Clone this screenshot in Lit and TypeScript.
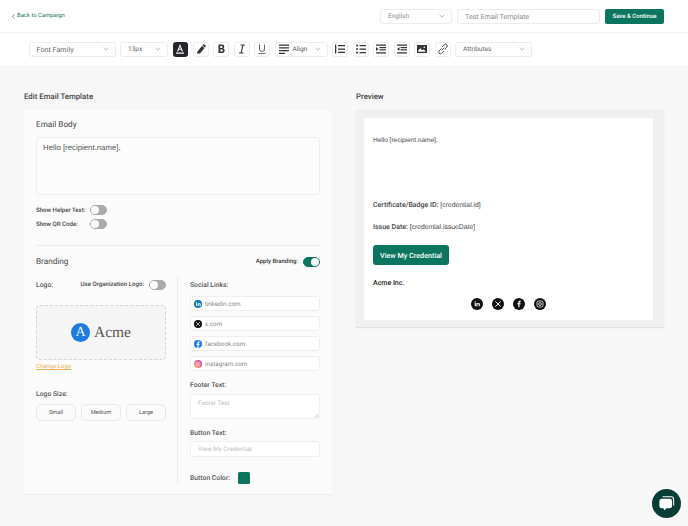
import { LitElement, html, css, svg } from "lit";
import { customElement } from "lit/decorators.js";

const chev = html`<svg class="chev" viewBox="0 0 10 6" width="6" height="4"><path d="M1 1l4 4 4-4" fill="none" stroke="currentColor" stroke-width="1"/></svg>`;
const ic = (body: unknown, s = 12) => html`<svg viewBox="0 0 24 24" width=${s} height=${s}>${body}</svg>`;

@customElement("app-root")
export class AppRoot extends LitElement {
  static styles = css`
    :host { display: block; width: 688px; height: 526px; overflow: hidden; position: relative; background: #f7f7f7; font-family: "Roboto", "Liberation Sans", sans-serif; color: #333; font-size: 6.5px; text-rendering: geometricPrecision; -webkit-font-smoothing: antialiased; }
    * { box-sizing: border-box; }
    .top { height: 33px; background: #fff; display: flex; align-items: center; padding: 0 24px 0 12px; border-bottom: 1px solid #f2f2f2; }
    .back { color: #0b7560; font-size: 5.9px; flex: 1; display: flex; align-items: center; gap: 2px; }
    .field { border: 1px solid #ececec; border-radius: 3px; background: #fff; display: flex; align-items: center; color: #8b8b8b; }
    .lang { width: 72px; height: 15px; padding: 0 6px 0 7px; justify-content: space-between; margin-right: 5px; }
    .name { width: 143px; height: 15px; padding: 0 7px; margin-right: 5px; font-size: 7.1px; }
    .save { width: 59px; height: 15px; border-radius: 2px; background: #0b7560; color: #fff; display: flex; align-items: center; justify-content: center; font-size: 6px; font-weight: 500; }
    .chev { color: #888; flex: none; }
    .tools { height: 34px; background: #fff; border-bottom: 1px solid #f0f0f0; display: flex; align-items: center; padding: 0 0 1px 28.5px; gap: 4.5px; }
    .sel { height: 15px; padding: 0 6px 0 7px; justify-content: space-between; color: #666; border-radius: 2.5px; }
    .sel.big { font-size: 7.2px; }
    .btn { width: 16px; height: 15px; border: 1px solid #ececec; border-radius: 2.5px; display: flex; align-items: center; justify-content: center; color: #333; background: #fff; flex: none; }
    .btn.dark { background: #24262a; border-color: #24262a; color: #fff; width: 15.5px; }
    .main { display: flex; padding: 23px 24px 0; gap: 24px; align-items: flex-start; }
    .col { width: 308px; flex: none; }
    h2 { margin: 0; font-size: 7.8px; font-weight: 500; color: #444; line-height: 14px; height: 20px; }
    .card { background: #fbfbfb; padding: 9px 12px 9px; height: 384px; box-shadow: 0 1px 1px #ececec; }
    h3 { margin: 0; font-size: 8.2px; font-weight: 400; color: #444; line-height: 13px; height: 11px; }
    .body { margin-top: 7px; height: 58px; border: 1px solid #efefef; border-radius: 3px; background: #fcfcfc; padding: 4px 6px; font-family: "Liberation Sans", sans-serif; font-size: 7.8px; color: #555; line-height: 12px; }
    .trow { display: flex; align-items: center; height: 14px; font-size: 6.1px; font-weight: 500; color: #444; }
    .trow span { width: 54px; }
    .toggle { width: 17px; height: 10px; border-radius: 5px; background: #aaa; border: 1px solid #aaa; display: block; flex: none; }
    .toggle::after { content: ""; display: block; width: 8px; height: 8px; border-radius: 50%; background: #fff; }
    .toggle.on { background: #0b7560; border-color: #0b7560; display: flex; justify-content: flex-end; }
    hr { border: 0; border-top: 1px solid #ececec; margin: 14px 0 10px; }
    .bhead { display: flex; align-items: center; justify-content: space-between; height: 11px; }
    .apply { display: flex; align-items: center; gap: 5px; font-size: 6px; font-weight: 500; }
    .cols { display: flex; margin-top: 10px; }
    .l { width: 130px; }
    .r { width: 143px; margin-left: 11px; border-left: 1px solid #eee; padding: 0 0 0 12px; height: 208px; }
    .lab { font-size: 6.8px; font-weight: 500; color: #555; line-height: 12px; height: 10px; }
    .lrow .lab, .colorrow .lab { line-height: 10px; }
    .lrow { display: flex; align-items: center; justify-content: space-between; height: 15px; }
    .lrow .small { font-size: 6.1px; font-weight: 500; color: #444; display: flex; align-items: center; gap: 5px; }
    .logo { margin-top: 13px; height: 55px; background: #f5f5f5; border: 1px dashed #d6d6d6; border-radius: 4px; display: flex; align-items: center; justify-content: center; gap: 4px; }
    .circle { width: 19px; height: 19px; border-radius: 50%; background: #1e7be0; color: #fff; display: flex; align-items: center; justify-content: center; font: 14px "Liberation Serif", serif; }
    .acme { font: 15.5px "Liberation Serif", serif; color: #555; }
    .change { display: block; margin-top: 2px; color: #eeaf5b; text-decoration: underline; font-size: 6px; line-height: 9px; }
    .sizes { display: flex; gap: 5px; margin-top: 6px; }
    .size { flex: 1; height: 17px; border: 1px solid #e8e8e8; border-radius: 5px; display: flex; align-items: center; justify-content: center; font-size: 5.7px; color: #555; }
    .social { margin-top: 4px; display: flex; flex-direction: column; gap: 5px; }
    .inp { height: 15px; background: #fff; border: 1px solid #eeeeee; border-radius: 2.5px; display: flex; align-items: center; gap: 3px; padding: 0 3px; color: #888; font-size: 6.3px; }
    .inp svg { flex: none; }
    .ph { color: #bdbdc6; padding: 0 7px; }
    .foot { position: relative; height: 25px; align-items: flex-start; padding-top: 4px; }
    .grip { position: absolute; right: 0; bottom: 0; }
    .colorrow { display: flex; align-items: center; margin-top: 15px; gap: 8px; height: 12px; }
    .swatch { width: 12px; height: 12px; background: #0b7560; border-radius: 1.5px; }
    .pv { height: 217px; background: #f0f0f0; padding: 8px 11px 7px 8px; box-shadow: 0 1px 1px #e2e2e2; }
    .mail { background: #fff; height: 202px; padding: 18px 9px 0; font-family: "Liberation Sans", sans-serif; font-size: 6.8px; color: #444; }
    .mail p { margin: 0; line-height: 9px; }
    .mail p.hi { font-size: 6.5px; }
    .mail b { font-family: "Roboto", sans-serif; font-weight: 500; font-size: 7px; }
    .cta { margin-top: 13px; width: 76px; height: 20px; background: #0b7560; border-radius: 3px; color: #fff; font-family: "Roboto", sans-serif; font-weight: 500; font-size: 7.2px; display: flex; align-items: center; justify-content: center; }
    .org { margin-top: 14px; font-family: "Roboto", sans-serif; font-weight: 500; font-size: 7px; color: #222; line-height: 9px; }
    .icons { display: flex; justify-content: center; gap: 9px; margin-top: 10px; }
    .dot { width: 12px; height: 12px; border-radius: 50%; background: #111; display: flex; align-items: center; justify-content: center; color: #fff; }
    .chat { position: absolute; left: 652px; top: 489px; width: 29px; height: 29px; border-radius: 50%; background: #0a3d36; display: flex; align-items: center; justify-content: center; }
  `;

  private tb(body: unknown, cls = "") {
    return html`<div class="btn ${cls}">${ic(body)}</div>`;
  }

  render() {
    const s = { f: "currentColor" };
    const lines = (xs: number[]) => xs.map((y) => svg`<rect x="9" y=${y} width="13" height="2.4" fill=${s.f}/>`);
    return html`
      <div class="top">
        <div class="back"><svg width="3" height="5" viewBox="0 0 3 5"><path d="M2.5.5L.5 2.5l2 2" fill="none" stroke="#0b7560" stroke-width=".7"/></svg>Back to Campaign</div>
        <div class="field lang">English ${chev}</div>
        <div class="field name">Test Email Template</div>
        <div class="save">Save &amp; Continue</div>
      </div>
      <div class="tools">
        <div class="field sel big" style="width:87px">Font Family ${chev}</div>
        <div class="field sel" style="width:48px">13px ${chev}</div>
        ${this.tb(svg`<path d="M12 2L6 17h2.500l1.200-3.400h4.600L15.500 17H18zM10.500 11.500L12 6.800l1.500 4.700z" fill="#fff"/><rect x="4" y="19" width="16" height="2.400" fill="#fff"/>`, "dark")}
        ${this.tb(svg`<path d="M4 21l1-4 9-11 5 4-9 11zM15 5l2-3 5 4-2 3z" fill="currentColor"/>`)}
        ${this.tb(svg`<path d="M7 3h6.500c3 0 5 1.700 5 4.300 0 1.600-.8 2.800-2 3.500 1.700.6 2.800 2 2.800 4 0 3-2.200 5.200-5.500 5.200H7zm3.500 3v4h2.500c1.200 0 2-.8 2-2s-.8-2-2-2zm0 7v4h3c1.300 0 2.200-.8 2.200-2s-.9-2-2.200-2z" fill="currentColor"/>`)}
        ${this.tb(svg`<path d="M9 3h9v1.800h-3.200L11.600 19.200H15V21H6v-1.800h3.300L12.500 4.800H9z" fill="currentColor"/>`)}
        ${this.tb(svg`<path d="M7 3v9a5 5 0 0 0 10 0V3" fill="none" stroke="currentColor" stroke-width="1.500"/><rect x="5" y="20" width="14" height="1.500" fill="currentColor"/>`)}
        <div class="field sel" style="width:53px;padding-left:2px;gap:3px;color:#555">
          ${ic(svg`<path d="M2 3h20v2.500H2zM2 8.500h20V11H2zM2 14h20v2.500H2zM2 19.500h12V22H2z" fill="#333"/>`)}
          <span style="flex:1">Align</span>${chev}
        </div>
        ${this.tb(svg`<path d="M2 3h2.500v18H2z" fill="currentColor"/><path d="M8 4h14v2.500H8zM8 10.800h14v2.500H8zM8 17.500h14V20H8z" fill="currentColor"/>`)}
        ${this.tb(svg`<circle cx="4" cy="5" r="2" fill="currentColor"/><circle cx="4" cy="12" r="2" fill="currentColor"/><circle cx="4" cy="19" r="2" fill="currentColor"/><path d="M9 4h13v2.500H9zM9 10.800h13v2.500H9zM9 17.800h13v2.500H9z" fill="currentColor"/>`)}
        ${this.tb(svg`<path d="M2 3h20v2.400H2zM2 18.600h20V21H2zM2 8l5 4-5 4z" fill="currentColor"/>${lines([8, 12.5])}`)}
        ${this.tb(svg`<path d="M2 3h20v2.400H2zM2 18.600h20V21H2zM7 8l-5 4 5 4z" fill="currentColor"/>${lines([8, 12.5])}`)}
        ${this.tb(svg`<path d="M2 4h20v16H2z" fill="currentColor"/><path d="M4.500 15l4-4.500 4 4 2.500-2 4 3.500v1.500h-14.500z" fill="#fff"/><circle cx="16.500" cy="8.500" r="1.600" fill="#fff"/>`)}
        ${this.tb(svg`<path d="M10 14l4-4M8.500 11.500l-4 4a3.500 3.500 0 0 0 5 5l4-4M15.500 12.500l4-4a3.500 3.500 0 0 0-5-5l-4 4" fill="none" stroke="currentColor" stroke-width="1.700" stroke-linecap="round"/>`)}
        <div class="field sel" style="width:77px">Attributes ${chev}</div>
      </div>
      <div class="main">
        <div class="col">
          <h2>Edit Email Template</h2>
          <div class="card">
            <h3>Email Body</h3>
            <div class="body">Hello [recipient.name],</div>
            <div style="height:8px"></div>
            <div class="trow"><span>Show Helper Text:</span><i class="toggle"></i></div>
            <div class="trow"><span>Show QR Code:</span><i class="toggle"></i></div>
            <hr />
            <div class="bhead"><h3>Branding</h3><div class="apply">Apply Branding: <i class="toggle on"></i></div></div>
            <div class="cols">
              <div class="l">
                <div class="lrow"><span class="lab">Logo:</span><span class="small">Use Organization Logo: <i class="toggle"></i></span></div>
                <div class="logo"><div class="circle">A</div><div class="acme">Acme</div></div>
                <a class="change">Change Logo</a>
                <div class="lab" style="margin-top:17px">Logo Size:</div>
                <div class="sizes"><div class="size">Small</div><div class="size">Medium</div><div class="size">Large</div></div>
              </div>
              <div class="r">
                <div class="lrow"><span class="lab">Social Links:</span></div>
                <div class="social">
                  <div class="inp"><svg viewBox="0 0 24 24" width="8" height="8"><circle cx="12" cy="12" r="12" fill="#0a78b5"/><path d="M6 10h3v8H6zM6 6h3v2.600H6zM11 10h3v1.200c.6-.9 1.600-1.400 2.700-1.400 2 0 3.300 1.300 3.300 3.700V18h-3v-4c0-1.100-.5-1.700-1.400-1.700S14 13 14 14v4h-3z" fill="#fff"/></svg>linkedin.com</div>
                  <div class="inp"><svg viewBox="0 0 24 24" width="8" height="8"><circle cx="12" cy="12" r="12" fill="#111"/><path d="M6 6l12 12M18 6L6 18" stroke="#fff" stroke-width="2"/></svg>x.com</div>
                  <div class="inp"><svg viewBox="0 0 24 24" width="8" height="8"><circle cx="12" cy="12" r="12" fill="#1877f2"/><path d="M13.500 24v-9h3l.5-3.500h-3.500V9.500c0-1 .5-1.800 1.900-1.800H17V4.600c-.5-.1-1.500-.2-2.600-.2-2.700 0-4.400 1.600-4.400 4.600v2.500H7V15h3v9z" fill="#fff"/></svg>facebook.com</div>
                  <div class="inp"><svg viewBox="0 0 24 24" width="8" height="8"><defs><linearGradient id="ig" x1="0" y1="1" x2="1" y2="0"><stop offset="0" stop-color="#fbc04a"/><stop offset=".55" stop-color="#f0568a"/><stop offset="1" stop-color="#b23cc8"/></linearGradient></defs><circle cx="12" cy="12" r="12" fill="url(#ig)"/><rect x="6" y="6" width="12" height="12" rx="3.500" fill="none" stroke="#fff" stroke-width="1.500"/><circle cx="12" cy="12" r="2.800" fill="none" stroke="#fff" stroke-width="1.500"/></svg>instagram.com</div>
                </div>
                <div class="lab" style="margin-top:8px">Footer Text:</div>
                <div class="inp ph foot" style="margin-top:5px">Footer Text<svg class="grip" width="5" height="5" viewBox="0 0 5 5"><path d="M4.500 1L1 4.500M4.500 3L3 4.500" stroke="#888" stroke-width=".5"/></svg></div>
                <div class="lab" style="margin-top:8px">Button Text:</div>
                <div class="inp ph" style="margin-top:4px;height:16px">View My Credential</div>
                <div class="colorrow"><span class="lab">Button Color:</span><div class="swatch"></div></div>
              </div>
            </div>
          </div>
        </div>
        <div class="col">
          <h2>Preview</h2>
          <div class="pv">
            <div class="mail">
              <p class="hi">Hello [recipient.name],</p>
              <p style="margin-top:56px"><b>Certificate/Badge ID:</b> [credential.id]</p>
              <p style="margin-top:13px"><b>Issue Date:</b> [credential.issueDate]</p>
              <div class="cta">View My Credential</div>
              <div class="org">Acme Inc.</div>
              <div class="icons">
                <div class="dot">${ic(svg`<path d="M5 9h3.500v10H5zM5 4.500h3.500v3H5zM10.500 9h3.300v1.500c.7-1 1.800-1.800 3.200-1.800 2.500 0 3.500 1.700 3.500 4.300v6h-3.500v-5.500c0-1.300-.5-2-1.600-2s-1.900.8-1.900 2V19h-3.500z" fill="#fff"/>`, 8)}</div>
                <div class="dot">${ic(svg`<path d="M4 4l16 16M20 4L4 20" stroke="#fff" stroke-width="2.800"/>`, 8)}</div>
                <div class="dot">${ic(svg`<path d="M13.500 22v-9h3l.5-3.500h-3.500V7.500c0-1 .4-1.700 1.900-1.700H17V2.700c-.5-.1-1.500-.2-2.600-.2-2.700 0-4.400 1.600-4.400 4.600v2.400H7V13h3v9z" fill="#fff"/>`, 8)}</div>
                <div class="dot">${ic(svg`<rect x="3" y="3" width="18" height="18" rx="5" fill="none" stroke="#fff" stroke-width="2.300"/><circle cx="12" cy="12" r="4.200" fill="none" stroke="#fff" stroke-width="2.300"/>`, 8)}</div>
              </div>
            </div>
          </div>
        </div>
      </div>
      <div class="chat">
        <svg viewBox="0 0 24 24" width="19" height="19"><path d="M7 3.500h11a3 3 0 0 1 3 3v8" fill="none" stroke="#fff" stroke-width="1.300"/><path d="M6 6h10a3 3 0 0 1 3 3v6a3 3 0 0 1-3 3h-4l-2.500 2.500L8 18H6a3 3 0 0 1-3-3V9a3 3 0 0 1 3-3z" fill="#fff"/></svg>
      </div>
    `;
  }
}
